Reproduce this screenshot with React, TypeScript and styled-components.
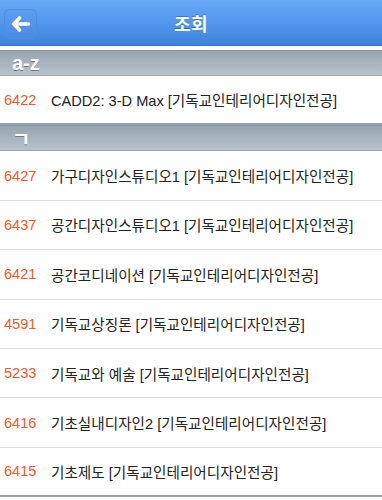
import React from "react";
import styled, { createGlobalStyle } from "styled-components";

const Global = createGlobalStyle`
  html, body { margin: 0; padding: 0; background: #ffffff; }
  body { font-family: "Liberation Sans", "Noto Sans CJK KR", sans-serif; }
  * { box-sizing: border-box; }
`;

const Page = styled.div`
  width: 382px;
  height: 500px;
  overflow: hidden;
  background: #ffffff;
  display: flex;
  flex-direction: column;
`;

const Header = styled.header`
  position: relative;
  height: 46px;
  flex: none;
  display: flex;
  align-items: center;
  justify-content: center;
  background: linear-gradient(#68a8f7 0%, #5396ec 50%, #3d82dc 100%);
  border-bottom: 1px solid #3574c9;
`;

const BackButton = styled.button`
  position: absolute;
  left: 4px;
  top: 9px;
  width: 33px;
  height: 30px;
  border-radius: 5px;
  border: 1px solid #4f8fe0;
  background: linear-gradient(#5e9ef0, #4a8ae4);
  display: flex;
  align-items: center;
  justify-content: center;
  padding: 0;
`;

const Title = styled.h1`
  margin: 0;
  color: #ffffff;
  font-family: "Noto Sans CJK KR", sans-serif;
  font-size: 18px;
  font-weight: 700;
  text-shadow: 0 -1px 0 rgba(0, 0, 0, 0.25);
  letter-spacing: 0.5px;
`;

const List = styled.div`
  padding-top: 4px;
  display: flex;
  flex-direction: column;
`;

const SectionHeader = styled.div`
  height: 26px;
  flex: none;
  display: flex;
  align-items: center;
  padding-left: 12px;
  background: linear-gradient(#97a5b0, #b8c2cb);
  border-top: 1px solid #8896a1;
  border-bottom: 1px solid #9aa6b0;
  color: #ffffff;
  font-family: "Liberation Sans", "Noto Sans CJK KR", sans-serif;
  font-size: 20px;
  font-weight: 700;
  text-shadow: 0 1px 0 rgba(60, 70, 80, 0.55);
`;

const Row = styled.div`
  height: 49.4px;
  flex: none;
  display: flex;
  align-items: center;
  padding-left: 4px;
  border-bottom: 1px solid #dcdcdc;
  background: #ffffff;
  font-size: 14.6px;
  font-family: "Liberation Sans", "Noto Sans CJK KR", sans-serif;

  &:last-child {
    border-bottom: 2px solid #97a3ac;
  }
`;

const Code = styled.span`
  width: 47px;
  flex: none;
  color: #f4582a;
`;

const Name = styled.span`
  color: #222222;
  white-space: nowrap;
`;

type Item = { code: string; name: string };

const sections: { title: string; items: Item[] }[] = [
  {
    title: "a-z",
    items: [{ code: "6422", name: "CADD2: 3-D Max [기독교인테리어디자인전공]" }],
  },
  {
    title: "ㄱ",
    items: [
      { code: "6427", name: "가구디자인스튜디오1 [기독교인테리어디자인전공]" },
      { code: "6437", name: "공간디자인스튜디오1 [기독교인테리어디자인전공]" },
      { code: "6421", name: "공간코디네이션 [기독교인테리어디자인전공]" },
      { code: "4591", name: "기독교상징론 [기독교인테리어디자인전공]" },
      { code: "5233", name: "기독교와 예술 [기독교인테리어디자인전공]" },
      { code: "6416", name: "기초실내디자인2 [기독교인테리어디자인전공]" },
      { code: "6415", name: "기초제도 [기독교인테리어디자인전공]" },
    ],
  },
];

const Group = styled.div`
  display: flex;
  flex-direction: column;
`;

export default function App() {
  return (
    <Page>
      <Global />
      <Header>
        <BackButton aria-label="back">
          <svg width="20" height="16" viewBox="0 0 20 16">
            <path
              d="M8.5 2 L2.8 8 L8.5 14 M3.5 8 H17.5"
              fill="none"
              stroke="#ffffff"
              strokeWidth="3.6"
              strokeLinecap="round"
              strokeLinejoin="round"
            />
          </svg>
        </BackButton>
        <Title>조회</Title>
      </Header>
      <List>
        {sections.map((s) => (
          <Group key={s.title}>
            <SectionHeader>{s.title}</SectionHeader>
            {s.items.map((it) => (
              <Row key={it.code}>
                <Code>{it.code}</Code>
                <Name>{it.name}</Name>
              </Row>
            ))}
          </Group>
        ))}
      </List>
    </Page>
  );
}
